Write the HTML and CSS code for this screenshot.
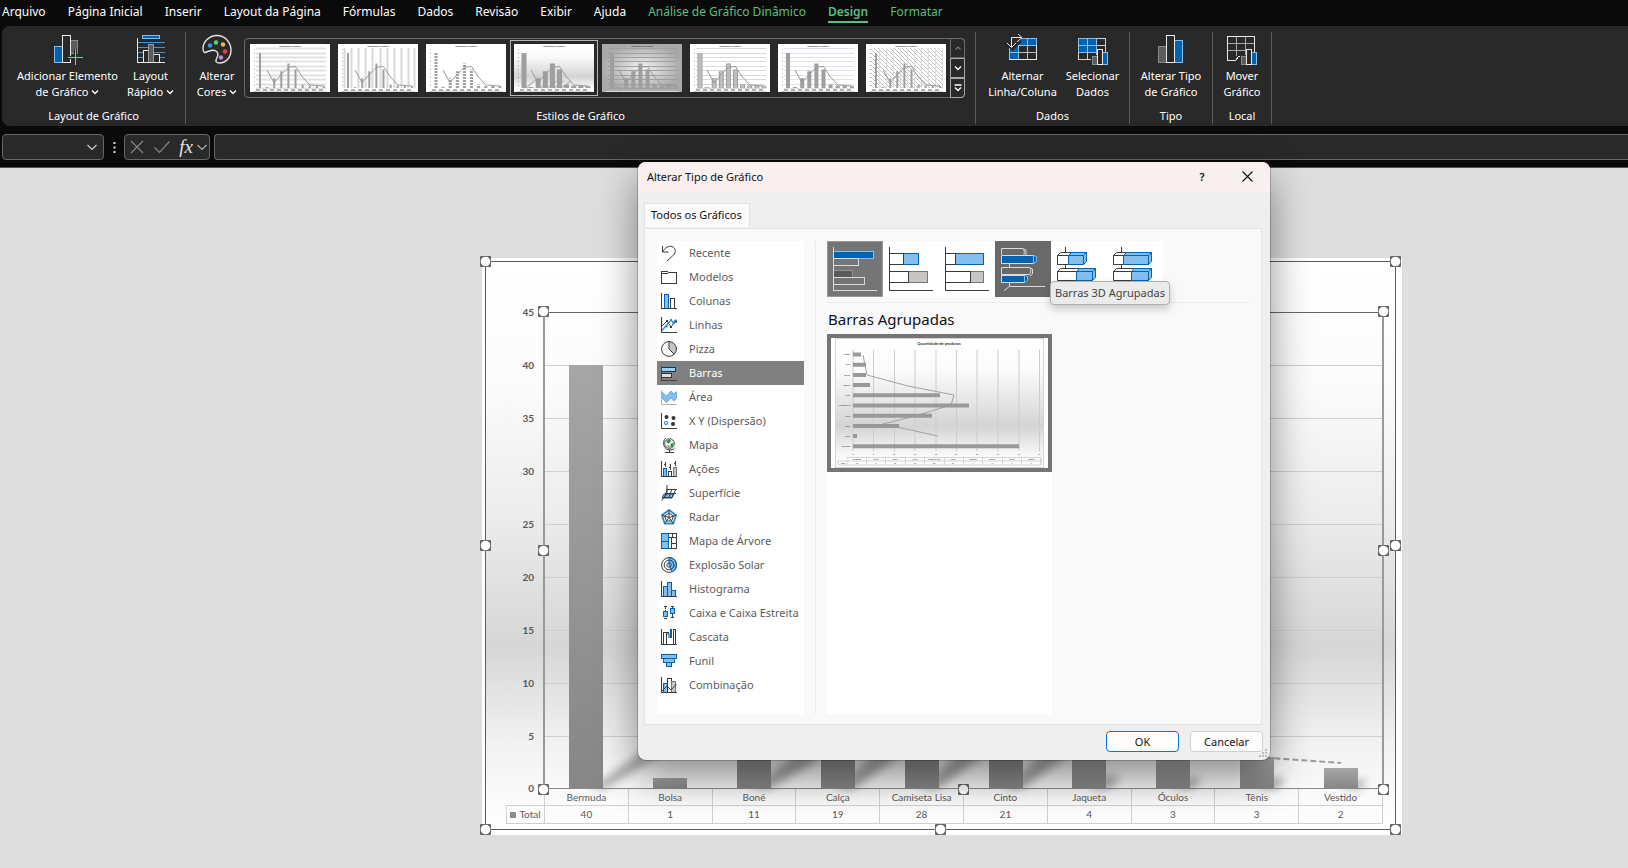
FILE: index.html
```html
<!DOCTYPE html>
<html lang="pt-BR">
<head>
<meta charset="utf-8">
<title>Alterar Tipo de Gráfico</title>
<link rel="stylesheet" href="styles.css">
</head>
<body>
<svg class="defs" width="0" height="0" aria-hidden="true">
  <defs>
    <linearGradient id="band" x1="0" y1="0" x2="0" y2="1">
      <stop offset="0" stop-color="#fff"/><stop offset=".25" stop-color="#fbfbfb"/><stop offset=".68" stop-color="#d4d4d4"/><stop offset=".9" stop-color="#f8f8f8"/><stop offset="1" stop-color="#fff"/>
    </linearGradient>
    <radialGradient id="vignette"><stop offset="0" stop-color="#f4f4f4"/><stop offset="1" stop-color="#a9a9a9"/></radialGradient>
    <linearGradient id="bar" x1="0" y1="0" x2="0" y2="1"><stop offset="0" stop-color="#a6a6a6"/><stop offset="1" stop-color="#868686"/></linearGradient>
    <pattern id="hatch" width="4" height="4" patternUnits="userSpaceOnUse"><path d="M0 0l4 4" stroke="#c4c4c4" stroke-width="1"/></pattern>
    <symbol id="mini-line" viewBox="0 0 80 48">
      <path d="M17 26L24 38.700L31 30.800L38.300 23.300L45.400 22.400L52.500 33L59.600 40.900L66.700 41.400L74 42" fill="none" stroke="#9a9a9a"/>
      <path d="M6 46h70" stroke="#b0b0b0" stroke-width="2" stroke-dasharray="4 3"/>
      <path d="M3 47.500h74" stroke="#d8d8d8"/>
      <path d="M4.500 5v39" stroke="#aaa" stroke-dasharray="1 3"/>
      <text x="40" y="3" text-anchor="middle" class="mini-title">Quantidade de produtos</text>
    </symbol>
    <symbol id="mini-bars" viewBox="0 0 80 48">
      <path d="M10 44V9M17 44v-1M24.200 44v-9.700M31.300 44V27.300M38.400 44V19.400M45.500 44V25.500M52.600 44v-3.500M59.700 44v-2.600M66.800 44v-2.600M74 44v-1.800"/>
    </symbol>
    <symbol id="mini-grid" viewBox="0 0 80 48">
      <path d="M6 4.500h70M6 9.500h70M6 13.500h70M6 17.500h70M6 22.500h70M6 26.500h70M6 31.500h70M6 35.500h70M6 40.500h70M6 44.500h70"/>
    </symbol>
    <symbol id="chev" viewBox="0 0 8 6"><path d="M1 1.500l3 3 3-3" fill="none" stroke="currentColor" stroke-width="1.300"/></symbol>
  </defs>
</svg>

<header class="app">
  <nav class="tabs" aria-label="Guias">
    <a href="#">Arquivo</a><a href="#">Página Inicial</a><a href="#">Inserir</a><a href="#">Layout da Página</a><a href="#">Fórmulas</a><a href="#">Dados</a><a href="#">Revisão</a><a href="#">Exibir</a><a href="#">Ajuda</a><a class="ctx" href="#">Análise de Gráfico Dinâmico</a><a class="ctx active" href="#" aria-current="page">Design</a><a class="ctx" href="#">Formatar</a>
  </nav>

  <div class="ribbon">
    <section class="group g-layout">
      <div class="tools">
        <button class="tool wide" type="button">
          <svg width="32" height="32" viewBox="0 0 32 32" shape-rendering="crispEdges"><path d="M2.500 12.500h8v16h-8z" fill="#0063b1" stroke="#83beec"/><path d="M18.500 6.500h7v13h-7z" fill="#5c5c5c" stroke="#8a8a8a"/><path d="M10.500 1.500h8v27h-8z" fill="#292929" stroke="#e8e8e8"/><path d="M23.500 15v16M16 23.500h15" stroke="#292929" stroke-width="3"/><path d="M23.500 15v16M16 23.500h15" stroke="#6fd685" /></svg>
          <span>Adicionar Elemento<br>de Gráfico <svg class="chev"><use href="#chev"/></svg></span>
        </button>
        <button class="tool" type="button">
          <svg width="32" height="32" viewBox="0 0 32 32" shape-rendering="crispEdges"><path d="M7.500 1.500h17v3h-17z" fill="#0063b1" stroke="#83beec"/><path d="M3 8.500h27M3 13.500h27M3 18.500h27M3 23.500h27" stroke="#3a96dd"/><path d="M8.500 16.500h5v12h-5zM18.500 20.500h6v8h-6z" fill="#292929" stroke="#e8e8e8"/><path d="M13.500 10.500h5v18h-5z" fill="#5c5c5c" stroke="#9a9a9a"/><path d="M2.500 4v24.500H30" fill="none" stroke="#e8e8e8"/></svg>
          <span>Layout<br>Rápido <svg class="chev"><use href="#chev"/></svg></span>
        </button>
      </div>
      <h2>Layout de Gráfico</h2>
    </section>

    <section class="group g-styles">
      <div class="tools">
        <button class="tool" type="button">
          <svg width="32" height="32" viewBox="0 0 32 32"><path d="M16 1.500C8 1.500 2 8 2 14.500c0 4 1.500 4.500 3.500 3.500 3-1.500 6-3 9.500-1 3 2 2 5 .5 7.500-1.500 3 0 4.500 3 4.500 6.500 0 11.500-5.500 11.500-13S24 1.500 16 1.500z" fill="none" stroke="#e4e4e4" stroke-width="1.400"/><circle cx="9" cy="11.500" r="2.200" fill="#3a96dd"/><circle cx="15" cy="8.500" r="2.200" fill="#5fce78"/><circle cx="22" cy="10.500" r="2.200" fill="#f5b04c"/><circle cx="24" cy="17.500" r="2.200" fill="#e8434a"/><circle cx="20" cy="23.500" r="2.200" fill="#c586d3"/></svg>
          <span>Alterar<br>Cores <svg class="chev"><use href="#chev"/></svg></span>
        </button>
        <div class="gallery">
          <div class="thumbs">
            <button type="button" aria-label="Estilo 1"><svg viewBox="0 0 80 48"><rect width="80" height="48" fill="#fff"/><use href="#mini-grid" class="grid thick"/><use href="#mini-bars" class="bars b2"/><use href="#mini-line"/></svg></button>
            <button type="button" aria-label="Estilo 2"><svg viewBox="0 0 80 48"><rect width="80" height="48" fill="#fff"/><path d="M6.500 4v40M13.500 4v40M20.500 4v40M27.500 4v40M34.500 4v40M42.500 4v40M49.500 4v40M56.500 4v40M63.500 4v40M70.500 4v40M76.500 4v40" stroke="#dadada" stroke-width="2"/><use href="#mini-bars" class="bars b2"/><use href="#mini-line"/></svg></button>
            <button type="button" aria-label="Estilo 3"><svg viewBox="0 0 80 48"><rect width="80" height="48" fill="#fff"/><use href="#mini-bars" class="bars b3"/><path d="M6 11.500h70M6 14.500h70M6 17.500h70M6 20.500h70M6 23.500h70M6 26.500h70M6 29.500h70M6 32.500h70M6 35.500h70M6 38.500h70M6 41.500h70" stroke="#fff"/><use href="#mini-line"/></svg></button>
            <button type="button" aria-label="Estilo 4" class="on" aria-pressed="true"><svg viewBox="0 0 80 48"><rect width="80" height="48" fill="url(#band)"/><path d="M12 44L26 32M26 44l8-6M33 44l10-7M40 44l10-7M47 44l10-7" stroke="#c4c4c4" stroke-width="2"/><use href="#mini-bars" class="bars b5"/><use href="#mini-line"/></svg></button>
            <button type="button" aria-label="Estilo 5"><svg viewBox="0 0 80 48"><rect width="80" height="48" fill="url(#vignette)"/><use href="#mini-grid" class="grid dark"/><use href="#mini-bars" class="bars b4"/><use href="#mini-line"/></svg></button>
            <button type="button" aria-label="Estilo 6"><svg viewBox="0 0 80 48"><rect width="80" height="48" fill="#fff"/><use href="#mini-grid" class="grid"/><use href="#mini-bars" class="bars b5"/><use href="#mini-bars" class="bars b6"/><use href="#mini-line"/></svg></button>
            <button type="button" aria-label="Estilo 7"><svg viewBox="0 0 80 48"><rect width="80" height="48" fill="#fff"/><use href="#mini-grid" class="grid blue"/><use href="#mini-bars" class="bars b4"/><use href="#mini-line"/></svg></button>
            <button type="button" aria-label="Estilo 8"><svg viewBox="0 0 80 48"><rect width="80" height="48" fill="#fff"/><rect x="5" y="4" width="72" height="40" fill="url(#hatch)"/><path d="M13.500 4v40M20.500 4v40M27.500 4v40M34.500 4v40M41.500 4v40M48.500 4v40M55.500 4v40M62.500 4v40M69.500 4v40M76.500 4v40" stroke="#dcdcdc"/><use href="#mini-bars" class="bars b2"/><use href="#mini-line"/></svg></button>
          </div>
          <div class="spin">
            <button type="button" disabled aria-label="Linha anterior"><svg width="8" height="6" viewBox="0 0 8 6"><path d="M1.500 4.500L4 2l2.500 2.500" fill="none" stroke="currentColor" stroke-width="1.200"/></svg></button>
            <button type="button" aria-label="Próxima linha"><svg width="8" height="6"><use href="#chev"/></svg></button>
            <button type="button" aria-label="Mais"><svg width="8" height="8" viewBox="0 0 8 8"><path d="M.5 1h7M1 3.500l3 3 3-3" fill="none" stroke="currentColor" stroke-width="1.300"/></svg></button>
          </div>
        </div>
      </div>
      <h2>Estilos de Gráfico</h2>
    </section>

    <section class="group g-data">
      <div class="tools">
        <button class="tool wide" type="button">
          <svg width="32" height="32" viewBox="0 0 32 32" shape-rendering="crispEdges"><path d="M2.500 4.500h27v21h-27z" fill="#292929"/><path d="M11.500 4.500h18v7h-18zM2.500 11.500h9v14h-9z" fill="#0063b1"/><path d="M11.500 11.500h18v14h-18zM11.500 18.500h18M20.500 11.500v14" fill="none" stroke="#bdbdbd"/><path d="M2.500 11.500v14h9v-14zM2.500 18.500h9M11.500 4.500v7h18v-7zM20.500 4.500v7" fill="none" stroke="#83beec"/><path d="M2 25.500h28M29.500 11v15" stroke="#e8e8e8"/><path d="M0 0h14v8l-9 9-5-5z" fill="#292929"/><path d="M4.500 13V3.500H14M10-1l5 4.500-5 4.500M0 9l4.500 4.500L9 9" fill="none" stroke="#e8e8e8" shape-rendering="auto"/></svg>
          <span>Alternar<br>Linha/Coluna</span>
        </button>
        <button class="tool" type="button">
          <svg width="32" height="32" viewBox="0 0 32 32" shape-rendering="crispEdges"><path d="M1.500 4.500h27v21h-27zM1.500 18.500h27M10.500 4v21M19.500 4v21M1.500 11.500h27" fill="none" stroke="#d0d0d0"/><path d="M1.500 4.500h18v14h-18z" fill="#0063b1" stroke="#83beec"/><path d="M10.500 4.500v14M1.500 11.500h18" stroke="#83beec"/><path d="M14 21h6v-6h8v3h4v14H14z" fill="#292929"/><path d="M15.500 22.500h5v8h-5z" fill="#5c5c5c" stroke="#8a8a8a"/><path d="M25.500 18.500h5v12h-5z" fill="#0063b1" stroke="#83beec"/><path d="M20.500 15.500h5v15h-5z" fill="#292929" stroke="#e8e8e8"/></svg>
          <span>Selecionar<br>Dados</span>
        </button>
      </div>
      <h2>Dados</h2>
    </section>

    <section class="group g-type">
      <div class="tools">
        <button class="tool" type="button">
          <svg width="32" height="32" viewBox="0 0 32 32" shape-rendering="crispEdges"><path d="M3.500 12.500h8v16h-8z" fill="#5c5c5c" stroke="#8a8a8a"/><path d="M19.500 6.500h8v22h-8z" fill="#0063b1" stroke="#83beec"/><path d="M11.500 1.500h8v27h-8z" fill="#292929" stroke="#e8e8e8"/></svg>
          <span>Alterar Tipo<br>de Gráfico</span>
        </button>
      </div>
      <h2>Tipo</h2>
    </section>

    <section class="group g-place">
      <div class="tools">
        <button class="tool" type="button">
          <svg width="32" height="32" viewBox="0 0 32 32" shape-rendering="crispEdges"><path d="M1.500 9.500h27M1.500 16.500h27M10.500 2v20M19.500 2v20" stroke="#a8a8a8"/><path d="M28.500 20V2.500h-27v24h8l3-4h5" fill="none" stroke="#e8e8e8"/><path d="M14 21h6v-6h8v3h4v14H14z" fill="#292929"/><path d="M15.500 22.500h5v8h-5z" fill="#5c5c5c" stroke="#8a8a8a"/><path d="M25.500 18.500h5v12h-5z" fill="#0063b1" stroke="#83beec"/><path d="M20.500 15.500h5v15h-5z" fill="#292929" stroke="#e8e8e8"/></svg>
          <span>Mover<br>Gráfico</span>
        </button>
      </div>
      <h2>Local</h2>
    </section>
  </div>

  <div class="formula">
    <div class="namebox"><input type="text" aria-label="Caixa de nome"><svg width="10" height="7" viewBox="0 0 10 7"><path d="M.5 1l4.500 4.500L9.500 1" fill="none" stroke="#d0d0d0" stroke-width="1.200"/></svg></div>
    <svg class="dots" width="3" height="11" viewBox="0 0 3 11"><path d="M.5 0h2v2h-2zM.5 4.500h2v2h-2zM.5 9h2v2h-2z" fill="#e0e0e0"/></svg>
    <div class="fx">
      <button type="button" aria-label="Cancelar entrada"><svg width="14" height="14" viewBox="0 0 14 14"><path d="M1 1l12 12M13 1L1 13" stroke="#858585" stroke-width="1.200"/></svg></button>
      <button type="button" aria-label="Inserir entrada"><svg width="16" height="14" viewBox="0 0 16 14"><path d="M.5 7.500l5 5L15.500 1.500" fill="none" stroke="#858585" stroke-width="1.200"/></svg></button>
      <button type="button" class="fn"><i>fx</i><svg width="10" height="7" viewBox="0 0 10 7"><path d="M.5 1l4.500 4.500L9.500 1" fill="none" stroke="#b0b0b0" stroke-width="1.200"/></svg></button>
    </div>
    <input class="entry" type="text" aria-label="Barra de fórmulas">
  </div>
</header>

<main class="sheet">
  <figure class="chart">
    <svg class="plot" width="920" height="531" viewBox="482 258 920 531">
      <defs><filter id="soft" x="-20%" y="-20%" width="140%" height="140%"><feGaussianBlur stdDeviation="4"/></filter></defs>
      <g class="ticks" text-anchor="end">
        <text x="534" y="316">45</text><text x="534" y="369">40</text><text x="534" y="422">35</text><text x="534" y="475">30</text><text x="534" y="528">25</text><text x="534" y="581">20</text><text x="534" y="634">15</text><text x="534" y="687">10</text><text x="534" y="740">5</text><text x="534" y="792">0</text>
      </g>
      <path d="M544 365.500h839M544 418.500h839M544 471.500h839M544 524.500h839M544 577.500h839M544 630.500h839M544 683.500h839M544 736.500h839" stroke="#cfcfcf"/>
      <g fill="#777" opacity=".6" filter="url(#soft)">
        <path d="M590 789h14L790 680l-20-20zM750 789h20l50-30-20-8zM834 789h20l60-44-20-8zM918 789h20l60-44-20-8zM1002 789h20l60-44-20-8zM1088 789h20l14-12-16-2zM1172 789h20l10-10-12-2zM1256 789h20l10-10-12-2zM1340 789h20l8-8-12-1z"/>
      </g>
      <g fill="url(#bar)">
        <path d="M569 365h34v424h-34z"/><path d="M653 778h34v11h-34z"/><path d="M737 672h34v117h-34z"/><path d="M821 588h34v201h-34z"/><path d="M905 492h34v297h-34z"/><path d="M989 566h34v223h-34z"/><path d="M1072 747h34v42h-34z"/><path d="M1156 757h34v32h-34z"/><path d="M1240 757h34v32h-34z"/><path d="M1324 768h34v21h-34z"/>
      </g>
      <path d="M670 571L754 725L838 630L922 540L1006 529L1089 657L1173 752L1257 757L1341 763" fill="none" stroke="#9c9c9c" stroke-width="2" stroke-dasharray="6 3"/>
      <path d="M544 312.500h839" stroke="#666"/>
      <path d="M544 312v477M1383 312v477" stroke="#999" stroke-width="2"/>
      <path d="M544 788.500h839" stroke="#8a8a8a"/>
    </svg>
    <table class="data">
      <thead><tr><td class="blank"></td><th>Bermuda</th><th>Bolsa</th><th>Boné</th><th>Calça</th><th>Camiseta Lisa</th><th>Cinto</th><th>Jaqueta</th><th>Óculos</th><th>Tênis</th><th>Vestido</th></tr></thead>
      <tbody><tr><th class="key"><span></span>Total</th><td>40</td><td>1</td><td>11</td><td>19</td><td>28</td><td>21</td><td>4</td><td>3</td><td>3</td><td>2</td></tr></tbody>
    </table>
    <svg class="handles" width="924" height="581" viewBox="480 256 924 581">
      <path d="M485.500 261.500h910v568h-910z" fill="none" stroke="#5c5c5c"/>
      <g class="box">
        <rect x="480" y="256" width="11" height="11" rx="1"/><rect x="1390" y="256" width="11" height="11" rx="1"/><rect x="480" y="540" width="11" height="11" rx="1"/><rect x="1390" y="540" width="11" height="11" rx="1"/><rect x="480" y="824" width="11" height="11" rx="1"/><rect x="935" y="824" width="11" height="11" rx="1"/><rect x="1390" y="824" width="11" height="11" rx="1"/>
        <rect x="538" y="306" width="11" height="11" rx="1"/><rect x="1378" y="306" width="11" height="11" rx="1"/><rect x="538" y="545" width="11" height="11" rx="1"/><rect x="1378" y="545" width="11" height="11" rx="1"/><rect x="538" y="784" width="11" height="11" rx="1"/><rect x="958" y="784" width="11" height="11" rx="1"/><rect x="1378" y="784" width="11" height="11" rx="1"/>
      </g>
      <g fill="#fff">
        <circle cx="485.500" cy="261.500" r="4.800"/><circle cx="1395.500" cy="261.500" r="4.800"/><circle cx="485.500" cy="545.500" r="4.800"/><circle cx="1395.500" cy="545.500" r="4.800"/><circle cx="485.500" cy="829.500" r="4.800"/><circle cx="940.500" cy="829.500" r="4.800"/><circle cx="1395.500" cy="829.500" r="4.800"/>
        <circle cx="543.500" cy="311.500" r="4.800"/><circle cx="1383.500" cy="311.500" r="4.800"/><circle cx="543.500" cy="550.500" r="4.800"/><circle cx="1383.500" cy="550.500" r="4.800"/><circle cx="543.500" cy="789.500" r="4.800"/><circle cx="963.500" cy="789.500" r="4.800"/><circle cx="1383.500" cy="789.500" r="4.800"/>
      </g>
    </svg>
  </figure>
</main>

<section class="dialog" role="dialog" aria-labelledby="dlg-title">
  <header class="titlebar">
    <h1 id="dlg-title">Alterar Tipo de Gráfico</h1>
    <button type="button" class="help" aria-label="Ajuda">?</button>
    <button type="button" aria-label="Fechar"><svg width="11" height="11" viewBox="0 0 11 11"><path d="M.5.5l10 10M10.500.5l-10 10" stroke="#111" stroke-width="1.100"/></svg></button>
  </header>
  <div class="tabrow"><button type="button" class="tab">Todos os Gráficos</button></div>
  <div class="panel">
    <ul class="types">
      <li><button type="button"><svg viewBox="0 0 16 16"><path d="M1.500 1v6h6M1.500 7C4 2.500 8 .5 11 1.500c4 1.500 4 6 1.500 8.500L6 16" class="k"/></svg>Recente</button></li>
      <li><button type="button"><svg viewBox="0 0 16 16" class="crisp"><path d="M.5 14.500v-12h6l1 1h8v11zM.5 4.500h6l1-1" class="k"/></svg>Modelos</button></li>
      <li><button type="button"><svg viewBox="0 0 16 16" class="crisp"><path d="M3.500 1.500h4v14h-4z" class="b"/><path d="M9.500 5.500h4v10h-4zM.5 0v15.500H16" class="k"/></svg>Colunas</button></li>
      <li><button type="button"><svg viewBox="0 0 16 16"><path d="M1 9l5-5 4 6 5-6" class="k"/><path d="M1 13.500L10 3l2.500 3L15 2.500" fill="none" stroke="#2b8ad6" stroke-width="1.300"/><path d="M5 3h2v2H5zM9 9h2v2H9zM14 3.500h2v2h-2z" fill="#333"/><path d="M9 2h2v2H9zM11.500 5h2v2h-2zM4.500 8.500h2v2h-2z" fill="#2b8ad6"/><path d="M.5 0v15.500H16" class="k"/></svg>Linhas</button></li>
      <li><button type="button"><svg viewBox="0 0 16 16"><circle cx="8" cy="8" r="7.400" fill="#fafafa"/><path d="M8 .6a7.400 7.400 0 0 1 5.200 12.600L8 8z" fill="#c8c6c4"/><circle cx="8" cy="8" r="7.400" class="k"/><path d="M8 .5V8l5.200 5.200" class="k"/></svg>Pizza</button></li>
      <li><button type="button" class="sel" aria-current="true"><svg viewBox="0 0 16 16" class="crisp"><path d="M.5 2.500h14v4H.5z" fill="#9bd0f7" stroke="#003e73"/><path d="M.5 8.500h10v4H.5z" fill="#e0e0e0" stroke="#333"/><path d="M.5 1v14.500H16" fill="none" stroke="#444"/></svg>Barras</button></li>
      <li><button type="button"><svg viewBox="0 0 16 16"><path d="M1 3l4.500 4L10 2l3 3 2.500-2.500v7L13 12l-3-3-4.500 4.500L1 9z" fill="#83beec" stroke="#5aa5e0" stroke-width=".8"/><path d="M.5 1v14.500H16" fill="none" stroke="#b4b4b4"/></svg>Área</button></li>
      <li><button type="button"><svg viewBox="0 0 16 16"><circle cx="5.500" cy="4" r="2" fill="#333"/><circle cx="12.500" cy="5" r="2" fill="#333"/><circle cx="12" cy="11" r="2" fill="#333"/><circle cx="5" cy="10" r="1.500" fill="#fff" stroke="#2b8ad6" stroke-width="1.200"/><path d="M.5 0v15.500H16" class="k"/></svg>X Y (Dispersão)</button></li>
      <li><button type="button"><svg viewBox="0 0 16 16"><circle cx="8.500" cy="6.500" r="4.800" fill="#fff" stroke="#444"/><path d="M5.500 4l3-2 1.500 2-2 2.500-2.500-1zM9.500 7l3-1.500-.5 4-2.500 1zM5.500 8l3 1v2z" fill="#2c8a45"/><path d="M5 1C1 4 2 11 7 12.700c3 .8 5.500-.2 6.500-1.700M8.500 13v2.500M4 15.500h9" class="k"/></svg>Mapa</button></li>
      <li><button type="button"><svg viewBox="0 0 16 16" class="crisp"><path d="M2.500 7.500h3v8h-3z" class="b"/><path d="M7.500 10.500h3v5h-3z" class="k"/><path d="M12.500 6.500h3v9h-3z" class="g"/><path d="M4.500 1v5M3 3.500h1M9.500 3v6M8 6.500h1M14.500 0v5M13 2.500h1M.5 0v15.500H16" class="k"/></svg>Ações</button></li>
      <li><button type="button"><svg viewBox="0 0 16 16"><path d="M3 9h10l-2 4H1z" class="b"/><path d="M5 4.500h11M4 8.500h11M6.500 4L3.500 12M11 4L8 12M15 4l-4 8M6 0v9L.5 15.500M1 12.500h10" class="k"/></svg>Superfície</button></li>
      <li><button type="button"><svg viewBox="0 0 16 16"><path d="M8 1l7 5.200-2.700 8.300H3.700L1 6.200z" fill="#fff" stroke="#2b8ad6" stroke-width="1.800"/><path d="M8 4l4.500 3-2 5h-5l-2-5zM8 1v7.500l7-2.300M8 8.500l4.300 6M8 8.500l-4.300 6M8 8.500L1 6.200" class="k"/></svg>Radar</button></li>
      <li><button type="button"><svg viewBox="0 0 16 16" class="crisp"><path d="M7.500 .5h8v15h-8zM7.500 4.500h8M10.500 4.500v11M10.500 10.500h5M11.500.5v4" class="k"/><path d="M.5.5h7v8h-7zM.5 8.500h7v7h-7z" class="b"/></svg>Mapa de Árvore</button></li>
      <li><button type="button"><svg viewBox="0 0 16 16"><circle cx="8" cy="8" r="7.400" fill="#fff"/><path d="M8 .6a7.400 7.400 0 0 1 3 14.200L8 8z" fill="#83beec"/><circle cx="8" cy="8" r="7.400" class="k"/><circle cx="8" cy="8" r="4.800" class="k"/><circle cx="8" cy="8" r="2.200" class="k"/><path d="M8 .6a7.400 7.400 0 0 1 3 14.200M8 3.200a4.800 4.800 0 0 1 2 9.200M8 .6V8l3 6.800" fill="none" stroke="#0063b1"/></svg>Explosão Solar</button></li>
      <li><button type="button"><svg viewBox="0 0 16 16" class="crisp"><path d="M2.500 5.500h4v10h-4zM6.500 1.500h4v14h-4zM10.500 9.500h4v6h-4z" class="b"/><path d="M.5 0v15.500H16" class="k"/></svg>Histograma</button></li>
      <li><button type="button"><svg viewBox="0 0 16 16" class="crisp"><path d="M4.500 1v13M11.500 1v12M3 1.500h3M3 13.500h3M10 1.500h3M10 12.500h3" class="k" stroke-dasharray="3 1"/><path d="M2.500 6.500h4v5h-4zM9.500 3.500h4v5h-4z" class="b"/></svg>Caixa e Caixa Estreita</button></li>
      <li><button type="button"><svg viewBox="0 0 16 16" class="crisp"><path d="M2.500 3.500h3v12h-3zM12.500.5h2v15h-2z" class="k"/><path d="M6 4h3v5H7V6H6z" fill="#999"/><path d="M9 0h2v9H9z" fill="#0063b1"/><path d="M.5 0v15.500H16M5 3.500h3" class="k"/></svg>Cascata</button></li>
      <li><button type="button"><svg viewBox="0 0 16 16" class="crisp"><path d="M.5 1.500h15v4H.5zM2.500 5.500h11v4h-11zM5.500 9.500h5v4h-5z" class="b"/></svg>Funil</button></li>
      <li><button type="button"><svg viewBox="0 0 16 16"><g class="crisp"><path d="M2.500 6.500h4v9h-4z" class="b"/><path d="M6.500 1.500h4v14h-4z" fill="#fff" stroke="#333"/><path d="M10.500 4.500h4v11h-4z" class="g"/><path d="M.5 0v15.500H16" class="k"/></g><path d="M1 14l5-5 4 4 5.500-6" class="k"/></svg>Combinação</button></li>
    </ul>

    <div class="detail">
      <div class="subtypes">
        <button type="button" class="cur" aria-label="Barras Agrupadas"><svg viewBox="0 0 56 56" class="crisp"><path d="M6.500 10.500h40v7h-40z" fill="#0063b1" stroke="#83beec"/><path d="M6.500 29.500h19v7h-19z" fill="#5a5a5a" stroke="#939393"/><path d="M6.500 17.500h25v7h-25zM6.500 36.500h31v7h-31zM6.500 6v43.500H50" fill="none" stroke="#dcdcdc"/></svg></button>
        <button type="button" aria-label="Barras Empilhadas"><svg viewBox="0 0 56 56" class="crisp"><path d="M20.500 12.500h15v11h-15z" class="b"/><path d="M25.500 30.500h19v11h-19z" class="g"/><path d="M6.500 12.500h14v11h-14zM6.500 30.500h19v11h-19zM6.500 6v43.500H50" class="k"/></svg></button>
        <button type="button" aria-label="Barras 100% Empilhadas"><svg viewBox="0 0 56 56" class="crisp"><path d="M16.500 12.500h28v11h-28z" class="b"/><path d="M31.500 30.500h13v11h-13z" class="g"/><path d="M6.500 12.500h10v11h-10zM6.500 30.500h25v11h-25zM6.500 6v43.500H50" class="k"/></svg></button>
        <button type="button" class="hot" aria-label="Barras 3D Agrupadas" aria-describedby="tip"><svg viewBox="0 0 56 56"><path d="M6.500 14.500h32v8h-32zM6.500 34.500h23v7h-23z" fill="#0063b1" stroke="#dcdcdc"/><path d="M38.500 14.500l3 1v5l-3 2zM29.500 34.500l3 1v4l-3 2z" fill="#0063b1" stroke="#83beec"/><path d="M6.500 13.500v-6h21l3.500 1.500v5M27.500 7.500c2 1 2 4 1.500 6M6.500 33.500v-7h28l3 1.500v5l-2.500 2M34.500 26.500c2 2 1.500 5 0 7H6.500M14.500 23v3M9 49.500l5.500-4H50M14.500 42v3.500" fill="none" stroke="#dcdcdc"/></svg></button>
        <button type="button" aria-label="Barras 3D Empilhadas"><svg viewBox="0 0 56 56"><path d="M6.500 14.500h11v9h-11zM6.500 14.500l3-3h11M6.500 30.500h19v9h-19zM6.500 30.500l3-3h19M14.500 6v5M14.500 24v3" class="k"/><path d="M17.500 14.500l3-3h15v9l-3 3h-15zM25.500 30.500l3-3h16v9l-3 3h-16zM17.500 14.500h15v9M32.500 14.500l3-3M25.500 30.500h16v9M41.500 30.500l3-3" class="b"/></svg></button>
        <button type="button" aria-label="Barras 3D 100% Empilhadas"><svg viewBox="0 0 56 56"><path d="M6.500 14.500h10v9h-10zM6.500 14.500l3-3h10M6.500 30.500h18v9h-18zM6.500 30.500l3-3h18M14.500 6v5M14.500 24v3" class="k"/><path d="M16.500 14.500l3-3h25v9l-3 3h-25zM24.500 30.500l3-3h17v9l-3 3h-17zM16.500 14.500h25v9M41.500 14.500l3-3M24.500 30.500h17v9M41.500 30.500l3-3" class="b"/></svg></button>
        <div class="tip" id="tip" role="tooltip">Barras 3D Agrupadas</div>
      </div>
      <h2>Barras Agrupadas</h2>
      <div class="previews">
        <button type="button" class="preview" aria-label="Prévia de Barras Agrupadas">
          <svg viewBox="0 0 217 130">
            <rect width="217" height="130" fill="#fff"/><rect x="4.500" y=".5" width="208" height="129" fill="url(#band)" stroke="#d4d4d4"/>
            <text x="108" y="7" text-anchor="middle" class="p-title">Quantidade de produtos</text>
            <path d="M22 12v101M42.500 12v101M63.500 12v101M84 12v101M105 12v101M125.500 12v101M146 12v101M167 12v101M188 12v101M208.500 12v101" stroke="#cdcdcd"/>
            <path d="M22 16.500h8M22 26.700h13M22 36.900h13M22 47.100h17M22 57.300h87M22 67.500h116M22 77.700h79M22 87.900h46M22 98h4M22 108.300h166" stroke="#999" stroke-width="4"/>
            <path d="M32 17l4 20 41 11 46 9-3 10-36 11-32 8 55 12" fill="none" stroke="#9a9a9a" stroke-width=".9"/>
            <g class="p-small" text-anchor="end"><text x="19" y="17">Vestido</text><text x="19" y="27">Tênis</text><text x="19" y="38">Óculos</text><text x="19" y="48">Jaqueta</text><text x="19" y="58">Cinto</text><text x="20" y="68">Camiseta Lisa</text><text x="19" y="79">Calça</text><text x="19" y="89">Boné</text><text x="19" y="99">Bolsa</text><text x="19" y="109">Bermuda</text></g>
            <g class="p-small" text-anchor="middle"><text x="22" y="117">0</text><text x="42" y="117">5</text><text x="63" y="117">10</text><text x="84" y="117">15</text><text x="105" y="117">20</text><text x="125" y="117">25</text><text x="146" y="117">30</text><text x="167" y="117">35</text><text x="188" y="117">40</text><text x="208" y="117">45</text>
              <text x="26" y="122">Bermuda</text><text x="45" y="122">Bolsa</text><text x="64" y="122">Boné</text><text x="84" y="122">Calça</text><text x="103" y="122">Camiseta Lisa</text><text x="122" y="122">Cinto</text><text x="142" y="122">Jaqueta</text><text x="161" y="122">Óculos</text><text x="181" y="122">Tênis</text><text x="200" y="122">Vestido</text>
              <text x="12" y="126">Total</text><text x="26" y="126">40</text><text x="45" y="126">1</text><text x="64" y="126">11</text><text x="84" y="126">19</text><text x="103" y="126">28</text><text x="122" y="126">21</text><text x="142" y="126">4</text><text x="161" y="126">3</text><text x="181" y="126">3</text><text x="200" y="126">2</text></g>
            <path d="M16 119.500h194v7.500H7v-4h203M16 119.500v7.500M35.500 119.500v7.500M54.500 119.500v7.500M74.500 119.500v7.500M93.500 119.500v7.500M113.500 119.500v7.500M132.500 119.500v7.500M151.500 119.500v7.500M171.500 119.500v7.500M190.500 119.500v7.500M210 119.500v7.500" fill="none" stroke="#c6c6c6" stroke-width=".7"/>
          </svg>
        </button>
      </div>
    </div>
  </div>
  <footer class="actions">
    <button type="button" class="primary">OK</button>
    <button type="button">Cancelar</button>
  </footer>
  <svg class="grip" width="10" height="10" viewBox="0 0 10 10"><path d="M6 0h2v2H6zM3 3h2v2H3zM6 3h2v2H6zM0 6h2v2H0zM3 6h2v2H3zM6 6h2v2H6z" fill="#bcbcbc"/></svg>
</section>
</body>
</html>
```
FILE: styles.css
```css
* { box-sizing: border-box; }
html, body { height: 100%; }
body {
  margin: 0;
  display: flex;
  flex-direction: column;
  position: relative;
  overflow: hidden;
  background: #dedede;
  font: 11px/16px "Noto Sans", "Open Sans", sans-serif;
}
button { font: inherit; color: inherit; background: none; border: 0; padding: 0; margin: 0; }
h1, h2 { margin: 0; font-weight: 400; }
.defs { position: absolute; }
.crisp { shape-rendering: crispEdges; }
.k { fill: none; stroke: #3b3a39; }
.b { fill: #83beec; stroke: #0063b1; }
.g { fill: #c8c6c4; stroke: #797775; }

/* Application chrome */
.app { background: #0a0a0a; color: #fff; border-bottom: 1px solid #555; height: 168px; flex: none; }
.tabs { display: flex; gap: 22px; padding: 4px 2px 0; height: 26px; font-size: 12px; white-space: nowrap; }
.tabs a { color: #fff; text-decoration: none; height: 19px; }
.tabs .ctx { color: #5bbd80; }
.tabs .active { font-weight: 600; border-bottom: 2px solid #5bbd80; }
.ribbon { display: flex; height: 100px; margin-left: 2px; padding: 6px 0 2px; background: #292929; border-radius: 8px 0 0 8px; }
.group { display: flex; flex-direction: column; justify-content: space-between; align-items: center; border-right: 1px solid #5a5a5a; }
.group h2 { font-size: 11px; line-height: 16px; }
.tools { display: flex; align-items: flex-start; justify-content: center; width: 100%; }
.tool { display: flex; flex-direction: column; align-items: center; gap: 2px; padding-top: 2px; white-space: nowrap; }
.tool svg { display: block; }
.tool .chev { display: inline-block; width: 8px; height: 6px; vertical-align: 1px; }
.g-layout { width: 184px; }
.g-layout .tools { gap: 6px; }
.g-layout .tool { width: 46px; }
.g-layout .wide { width: 108px; }
.g-styles { width: 790px; }
.g-styles .tools { gap: 2px; justify-content: flex-start; padding-left: 6px; }
.g-styles .tool { width: 50px; }
.g-data { width: 154px; }
.g-data .tools { gap: 4px; }
.g-data .tool { width: 56px; }
.g-data .wide { width: 76px; }
.g-type { width: 83px; }
.g-place { width: 59px; }
.gallery { display: flex; height: 60px; margin-top: 6px; border: 1px solid #6a6a6a; border-radius: 4px; }
.thumbs { display: flex; padding: 1px 0 1px 1px; }
.thumbs button { width: 88px; height: 56px; padding: 3px; border: 1px solid transparent; }
.thumbs button.on { border-color: #b5b5b5; }
.thumbs svg { display: block; width: 80px; height: 48px; }
.grid { stroke: #d9d9d9; }
.grid.thick { stroke: #e2e2e2; stroke-width: 2; }
.grid.dark { stroke: #a0a0a0; }
.grid.blue { stroke: #dfe3ec; }
.bars { stroke: #9f9f9f; }
.b2 { stroke-width: 2; }
.b3 { stroke-width: 3; }
.b4 { stroke-width: 4; }
.b5 { stroke-width: 5; }
.b6 { stroke: #bdbdbd; stroke-width: 3; }
.mini-title { font: 700 2px Lato, sans-serif; fill: #333; }
.spin { display: flex; flex-direction: column; width: 15px; margin: -1px -1px -1px 0; }
.spin button { flex: 1; display: grid; place-items: center; border: 1px solid #a8a8a8; color: #fff; }
.spin button:disabled { border-color: #6a6a6a; color: #777; border-top-right-radius: 4px; }
.spin button:last-child { border-bottom-right-radius: 4px; }

.formula { display: flex; align-items: center; height: 26px; margin-top: 8px; padding-left: 2px; }
.formula > div, .entry { height: 26px; background: #292929; border: 1px solid #666; border-radius: 4px; }
.formula input { background: transparent; border: 0; color: #fff; min-width: 0; }
.namebox { display: flex; align-items: center; width: 102px; padding-right: 6px; }
.namebox input { flex: 1; }
.dots { margin: 0 8px 0 9px; }
.fx { display: flex; align-items: center; justify-content: space-between; width: 86px; margin-right: 4px; padding: 0 2px 0 5px; }
.fx button { display: flex; align-items: center; gap: 4px; }
.fn i { font: italic 19px/20px "Liberation Serif", serif; color: #e6e6e6; }
.formula .entry { flex: 1; background: #292929; border: 1px solid #666; border-right: 0; border-radius: 4px 0 0 4px; }

/* Worksheet and chart object */
.sheet { flex: 1; position: relative; min-height: 0; }
.chart { position: absolute; left: 482px; top: 90px; width: 920px; height: 577px; margin: 0; background: linear-gradient(#fff 0%, #fbfbfb 22%, #ececec 45%, #d6d6d6 68%, #f2f2f2 85%, #fff 100%); border: solid #fff; border-width: 3px 6px 6px 3px; }
.plot { display: block; margin: -3px 0 0 -3px; overflow: visible; }
.ticks { font: 700 10px Lato, sans-serif; fill: #595959; }
.data { margin-left: 21px; width: 877px; table-layout: fixed; border-collapse: collapse; font: 10px/14px Lato, sans-serif; color: #595959; }
.data th, .data td { border: 1px solid #d0d0d0; padding: 0; text-align: center; font-weight: 400; height: 16px; white-space: nowrap; }
.data tbody th, .data tbody td { height: 18px; }
.data thead th { border-top: 0; }
.data .blank { width: 38px; border: 0; }
.data .key span { display: inline-block; width: 6px; height: 6px; margin-right: 3px; background: #8e8e8e; }
.handles { position: absolute; left: -5px; top: -5px; }
.box { fill: #636363; }

/* Dialog */
.dialog { position: absolute; left: 638px; top: 162px; width: 632px; background: #efefef; border-radius: 8px; color: #111; box-shadow: 0 0 0 1px rgba(0,0,0,.2), 0 16px 40px rgba(0,0,0,.45); }
.titlebar { display: flex; align-items: center; height: 30px; padding: 0 17px 1px 9px; background: #f9f0ef; border-radius: 8px 8px 0 0; }
.titlebar h1 { flex: 1; font-size: 11px; }
.titlebar button { display: grid; place-items: center; width: 12px; margin-left: 33px; }
.help { font-weight: 600; }
.tabrow { padding: 11px 6px 0; height: 36px; }
.tab { height: 24px; padding: 0 7px 2px 6px; background: #fbfbfb; border: 1px solid #e2e2e2; border-bottom: 0; }
.panel { display: flex; margin: 0 8px 0 6px; padding: 12px 12px 10px; background: #f9f9f9; border: 1px solid #e3e3e3; }
.types { list-style: none; margin: 0; padding: 0 0 17px; width: 147px; background: #fff; }
.types button { display: flex; align-items: center; gap: 12px; width: 100%; height: 24px; padding-left: 4px; color: #5c5c5c; white-space: nowrap; }
.types svg { width: 16px; height: 16px; flex: none; }
.types .sel { background: #808080; color: #fff; }
.detail { flex: 1; display: flex; flex-direction: column; margin-left: 11px; padding-left: 11px; border-left: 1px solid #ececec; }
.subtypes { position: relative; display: flex; padding-bottom: 5px; border-bottom: 1px solid #ececec; }
.subtypes button { width: 56px; height: 56px; background: #fff; }
.subtypes svg { display: block; width: 56px; height: 56px; }
.subtypes .cur { background: #757575; box-shadow: inset 0 0 0 1px #9a9a9a; }
.subtypes .hot { background: #696969; }
.tip { position: absolute; left: 223px; top: 40px; padding: 3px 4px; background: #ebebeb; border: 1px solid #b0b0b0; border-radius: 4px; color: #444; white-space: nowrap; box-shadow: 0 4px 8px rgba(0,0,0,.2); }
.detail h2 { margin: 5px 0 4px 1px; font-size: 15px; line-height: 22px; }
.previews { flex: 1; width: 225px; background: #fff; }
.preview { display: block; width: 225px; height: 138px; border: 4px solid #757575; }
.preview svg { display: block; width: 217px; height: 130px; }
.p-title { font: 700 4px Lato, sans-serif; fill: #333; }
.p-small { font: 700 2px Lato, sans-serif; fill: #555; }
.actions { display: flex; justify-content: flex-end; gap: 11px; padding: 6px 7px 8px; }
.actions button { width: 73px; height: 21px; background: #fdfdfd; border: 1px solid #d0d0d0; border-radius: 4px; }
.actions .primary { border-color: #0078d4; }
.grip { position: absolute; right: 1px; bottom: 1px; }
```
